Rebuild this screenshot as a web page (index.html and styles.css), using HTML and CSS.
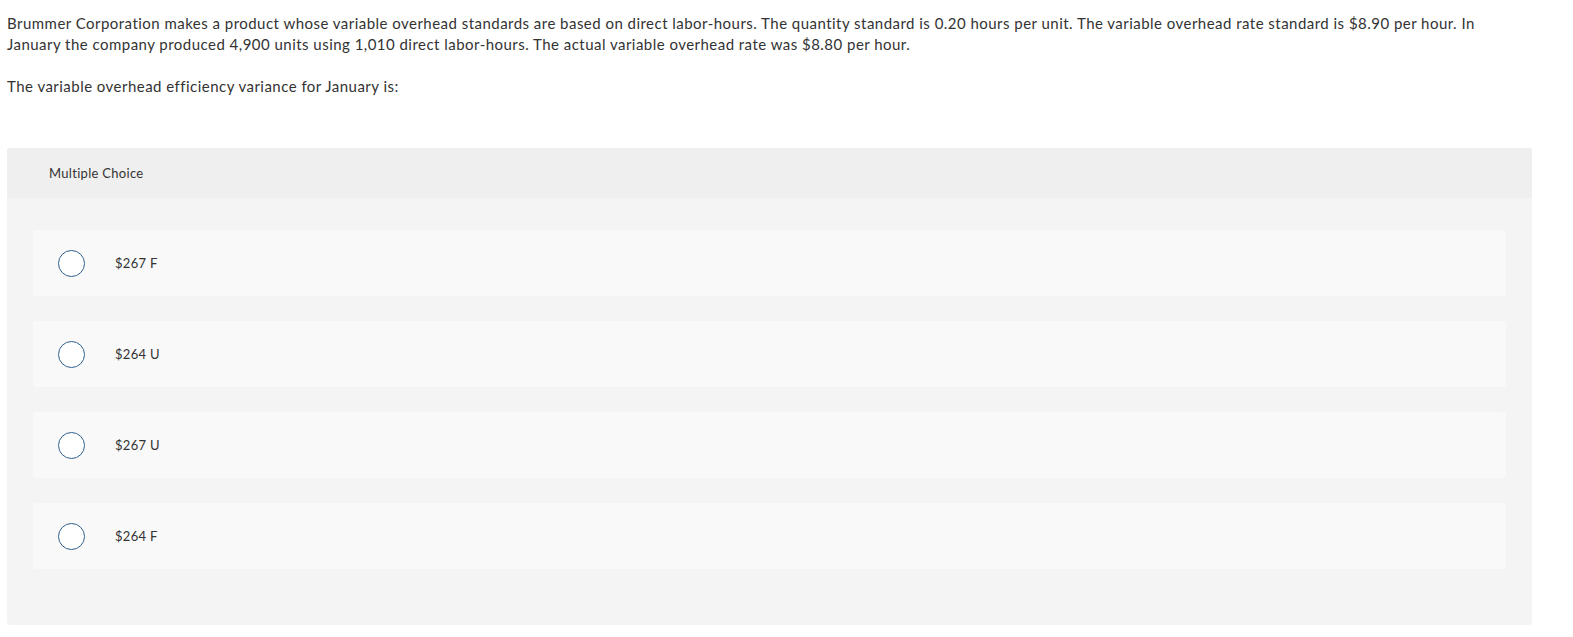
FILE: index.html
```html
<!DOCTYPE html>
<html>
<head>
<meta charset="utf-8">
<link rel="stylesheet" href="styles.css">
</head>
<body>
<div class="question">
  <p class="stem">Brummer Corporation makes a product whose variable overhead standards are based on direct labor-hours. The quantity standard is 0.20 hours per unit. The variable overhead rate standard is $8.90 per hour. In January the company produced 4,900 units using 1,010 direct labor-hours. The actual variable overhead rate was $8.80 per hour.</p>
  <p class="prompt">The variable overhead efficiency variance for January is:</p>
</div>
<div class="mc">
  <div class="mc-header">Multiple Choice</div>
  <div class="mc-body">
    <div class="option"><span class="radio"></span><span class="label">$267 F</span></div>
    <div class="option"><span class="radio"></span><span class="label">$264 U</span></div>
    <div class="option"><span class="radio"></span><span class="label">$267 U</span></div>
    <div class="option"><span class="radio"></span><span class="label">$264 F</span></div>
  </div>
</div>
</body>
</html>
```
FILE: styles.css
```css
html, body { margin: 0; padding: 0; background: #fff; }
body {
  font-family: "Lato", "Open Sans", sans-serif;
  color: #333;
  padding: 0 7px;
  width: 1525px;
}
.question { padding-top: 13px; }
.stem {
  margin: 0;
  max-width: 1500px;
  font-size: 15px;
  line-height: 21px;
  letter-spacing: 0.47px;
}
.prompt {
  margin: 21px 0 0 0;
  font-size: 15px;
  line-height: 21px;
  letter-spacing: 0.47px;
}
.mc {
  margin-top: 51px;
  background: #f4f4f4;
  border-radius: 3px;
  overflow: hidden;
}
.mc-header {
  background: #efefef;
  height: 50px;
  display: flex;
  align-items: center;
  padding-left: 42px;
  font-size: 13px;
  letter-spacing: 0.3px;
  color: #333;
}
.mc-body {
  padding: 32px 26px 56px 26px;
  display: flex;
  flex-direction: column;
  gap: 25px;
}
.option {
  background: #f9f9f9;
  border-radius: 3px;
  height: 66px;
  display: flex;
  align-items: center;
  padding-left: 25px;
}
.radio {
  width: 25px;
  height: 25px;
  border: 1.5px solid #2f5f8f;
  border-radius: 50%;
  background: #fff;
  flex: none;
}
.label {
  margin-left: 30px;
  font-size: 13px;
  letter-spacing: 0.3px;
  color: #333;
}
```
